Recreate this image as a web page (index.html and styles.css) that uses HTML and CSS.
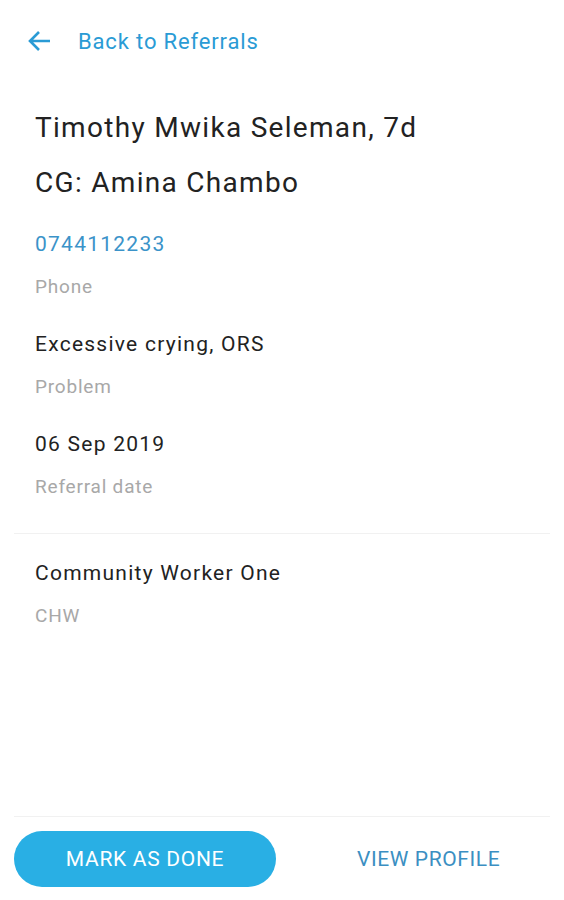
FILE: index.html
```html
<!DOCTYPE html>
<html>
<head>
<meta charset="utf-8">
<link rel="stylesheet" href="styles.css">
</head>
<body>
<div class="page">
  <header class="topbar">
    <svg class="back-icon" width="24" height="22" viewBox="0 0 24 22">
      <path d="M23 11H3 M12 2L3 11l9 9" fill="none" stroke="#2a9bd5" stroke-width="2.6" stroke-linecap="butt" stroke-linejoin="miter"/>
    </svg>
    <span class="back-text">Back to Referrals</span>
  </header>
  <main class="main">
    <section class="title">
      <div class="title-line">Timothy Mwika Seleman, 7d</div>
      <div class="title-line">CG: Amina Chambo</div>
    </section>
    <div class="field">
      <div class="value link">0744112233</div>
      <div class="label">Phone</div>
    </div>
    <div class="field">
      <div class="value">Excessive crying, ORS</div>
      <div class="label">Problem</div>
    </div>
    <div class="field">
      <div class="value">06 Sep 2019</div>
      <div class="label">Referral date</div>
    </div>
    <hr class="divider">
    <div class="field field-after">
      <div class="value">Community Worker One</div>
      <div class="label">CHW</div>
    </div>
  </main>
  <footer class="footer">
    <button class="btn-primary">MARK AS DONE</button>
    <span class="btn-text">VIEW PROFILE</span>
  </footer>
</div>
</body>
</html>
```
FILE: styles.css
```css
html, body {
  margin: 0;
  padding: 0;
  background: #ffffff;
}
body {
  font-family: Roboto, "Noto Sans", sans-serif;
  color: #222222;
}
.page {
  display: flex;
  flex-direction: column;
  min-height: 900px;
}
.topbar {
  height: 82px;
  display: flex;
  align-items: center;
  padding-left: 27px;
}
.back-icon {
  display: block;
}
.back-text {
  margin-left: 27px;
  font-size: 22px;
  letter-spacing: 0.85px;
  color: #2a9bd5;
}
.main {
  flex: 1;
}
.title {
  padding: 18px 0 0 35px;
}
.title-line {
  font-size: 28px;
  letter-spacing: 1.3px;
  line-height: 55px;
  color: #222222;
}
.field {
  padding-left: 35px;
  margin-top: 14px;
}
.value {
  font-size: 21px;
  letter-spacing: 1.25px;
  line-height: 40px;
  color: #222222;
}
.value.link {
  color: #3b93c9;
}
.label {
  font-size: 19px;
  letter-spacing: 0.8px;
  line-height: 46px;
  color: #a8a8a8;
}
.divider {
  border: 0;
  border-top: 1px solid #f1f1f1;
  margin: 23px 14px 0;
}
.field-after {
  margin-top: 19px;
}
.footer {
  margin: 0 14px;
  border-top: 1px solid #f1f1f1;
  padding: 14px 0 13px;
  display: flex;
  align-items: center;
}
.btn-primary {
  width: 262px;
  height: 56px;
  border: 0;
  border-radius: 28px;
  background: #29afe4;
  color: #ffffff;
  font-family: Roboto, "Noto Sans", sans-serif;
  font-size: 21px;
  letter-spacing: 0.7px;
  padding: 0;
}
.btn-text {
  margin-left: 81px;
  font-size: 21px;
  letter-spacing: 0.6px;
  color: #3b8fc2;
}
```
